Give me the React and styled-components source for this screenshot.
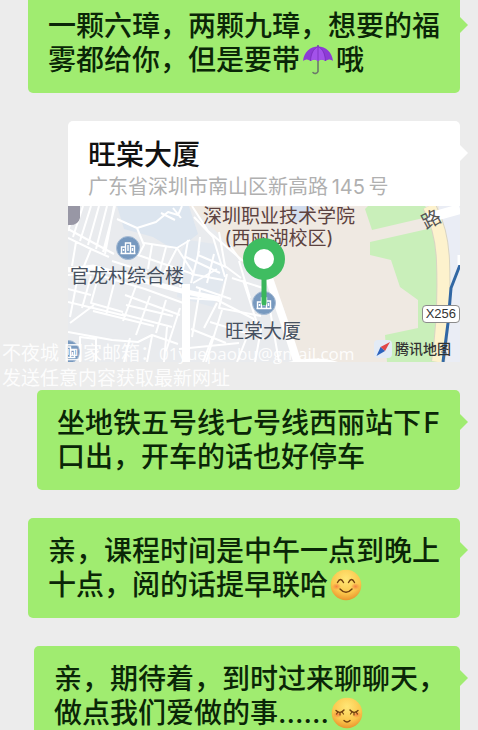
import React from "react";
import styled, { createGlobalStyle } from "styled-components";

const GlobalStyle = createGlobalStyle`
    * {
        box-sizing: border-box;
    }
    body {
        margin: 0;
        background: #ececec;
        font-family: Inter, "Noto Sans CJK SC", sans-serif;
    }
`

const Page = styled.main`
    position: relative;
    height: 100vh;
    overflow: hidden;
`

const Chat = styled.div`
    display: flex;
    flex-direction: column;
    align-items: flex-end;
    gap: 28px;
    margin-top: -7px;
    padding: 0 18px;
`

const Message = styled.div`
    position: relative;
    max-width: 100%;
    border-radius: 5px;
    background: ${(props) => props.$color};
    &::after {
        content: "";
        position: absolute;
        top: 24px;
        right: -8px;
        border-style: solid;
        border-width: 8px 0 8px 8px;
        border-color: transparent transparent transparent ${(props) => props.$color};
    }
`

const Text = styled.p`
    margin: 0;
    padding: 16px ${(props) => (props.$endsInComma ? 14 : 20)}px 16px 20px;
    color: #0a2607;
    font-size: 28px;
    font-weight: 500;
    line-height: 34px;
    white-space: nowrap;
`

const Emoji = styled.svg`
    width: 32px;
    height: 32px;
    margin: 0 2px;
    vertical-align: -6px;
`

const Place = styled(Message)`
    width: 100%;
    max-width: 392px;
`

const PlaceHead = styled.header`
    height: 85px;
    padding: 17px 20px 0;
    h2 {
        margin: 0;
        color: #111;
        font-size: 28px;
        font-weight: 500;
        line-height: 34px;
    }
    p {
        margin: 3px 0 0;
        color: #b0b0b0;
        font-size: 20px;
        line-height: 24px;
        white-space: nowrap;
    }
`

const MapBox = styled.div`
    position: relative;
    height: 156px;
    overflow: hidden;
`

const MapArt = styled.svg`
    display: block;
    width: 392px;
    height: 156px;
`

const Label = styled.span`
    position: absolute;
    left: ${(props) => props.$x}px;
    top: ${(props) => props.$y}px;
    color: ${(props) => props.$color || "#475160"};
    font-size: 19px;
    line-height: 22px;
    text-align: center;
    white-space: nowrap;
    transform: rotate(${(props) => props.$turn || 0}deg);
`

const RoadSign = styled.span`
    position: absolute;
    right: 0;
    top: 99px;
    padding: 0 3px;
    border: 1px solid #8b8b8b;
    border-radius: 4px;
    background: #fff;
    color: #333;
    font-family: "Liberation Sans", sans-serif;
    font-size: 13px;
    line-height: 16px;
`

const Credit = styled.div`
    position: absolute;
    right: 9px;
    bottom: 3px;
    display: flex;
    align-items: center;
    gap: 3px;
    color: #333;
    font-size: 14px;
    font-weight: 500;
    line-height: 20px;
`

const Watermark = styled.div`
    position: absolute;
    top: 341px;
    left: 2px;
    color: rgba(255, 255, 255, 0.9);
    font-family: "Open Sans", "Noto Sans CJK SC", sans-serif;
    font-size: 19px;
    line-height: 25px;
    white-space: nowrap;
    pointer-events: none;
`

const Mail = styled.span`
    font-size: 17px;
`

const Umbrella = () => (
    <Emoji viewBox="0 0 32 32" aria-label="umbrella">
        <path d="M16 13v14.500a3 3 0 0 1-5 1" fill="none" stroke="#6c7a6a" strokeWidth="1.6" strokeLinecap="round" />
        <path d="M16 1v3" stroke="#6d3aa0" strokeWidth="1.4" />
        <path d="M1 17C2 8 8 2.500 16 2.500S30 8 31 17c-3-2-5-2-7.500 0-2.500-2-5-2-7.500 0-2.500-2-5-2-7.500 0C6 15 4 15 1 17Z" fill="#8d3bd6" />
        <path d="M8.500 17C9 9 12 4 16 2.500 20 4 23 9 23.500 17c-2.500-2-5-2-7.500 0-2.500-2-5-2-7.500 0Z" fill="#a352ea" />
        <path d="M16 3v13.500M16 2.500C11 5 9 10 8.500 17M16 2.500C21 5 23 10 23.500 17" fill="none" stroke="#7429b5" strokeWidth=".7" />
    </Emoji>
)

const Face = ({ id, children, label }) => (
    <Emoji viewBox="0 0 32 32" aria-label={label}>
        <defs>
            <radialGradient id={id} cx="50%" cy="30%" r="72%">
                <stop offset="0" stopColor="#ffe777" />
                <stop offset=".65" stopColor="#fbc74c" />
                <stop offset="1" stopColor="#e8902b" />
            </radialGradient>
            <radialGradient id={id + "-blush"}>
                <stop offset="0" stopColor="#f3733d" stopOpacity=".8" />
                <stop offset="1" stopColor="#f3733d" stopOpacity="0" />
            </radialGradient>
        </defs>
        <circle cx="16" cy="16" r="15.300" fill={`url(#${id})`} />
        <ellipse cx="6.500" cy="17.500" rx="4.500" ry="3.500" fill={`url(#${id}-blush)`} />
        <ellipse cx="25.500" cy="17.500" rx="4.500" ry="3.500" fill={`url(#${id}-blush)`} />
        <g fill="none" stroke="#71400f" strokeWidth="1.400" strokeLinecap="round">
            {children}
        </g>
    </Emoji>
)

const Smile = () => (
    <Face id="smile" label="smile">
        <path d="M7.500 13.500q3-6 6 0M18.500 13.500q3-6 6 0M10 20q6 6.500 12 0" />
    </Face>
)

const Shy = () => (
    <Face id="shy" label="shy smile">
        <path d="M5 13.500q4 4 8-.5M19 13q4 4.500 8 .5M13 23.500q3 3 6 0" />
        <path d="M5.500 17l1.500-2M9 18v-2.500M12.500 17l-1.500-2M19.500 17l1.500-2M23 18v-2.500M26.500 17l-1.500-2" strokeWidth="1.200" />
    </Face>
)

const Building = ({ x, y }) => (
    <g transform={`translate(${x} ${y})`}>
        <circle r="11.500" fill="#7799bf" stroke="#a9bdd5" />
        <path d="M-6.500 5v-6h4v6M-2.500 5v-10h5v10M2.500 5v-7h4v7M-7.500 5.500h15M0-3v6M4.500 0v3M-4.500 1v2" fill="none" stroke="#fff" strokeWidth="1.400" />
    </g>
)

const MapDrawing = () => (
    <MapArt viewBox="0 0 392 156" aria-hidden="true">
        <rect width="392" height="156" fill="#e9ebee" />
        <path d="M49 0h72l9 28-22 17-23-14-29-8Z" fill="#dce5ef" />
        <path d="M120 34l27 4 12 30-14 33-36-10 4-45Z" fill="#e2e8ef" />
        <path d="M121 0h271v156H230l-14-53-15-29-27-17-24-30Z" fill="#efe9e2" />
        <path d="M222 0h21l-4 14-13 2Z" fill="#d2ddee" />

        {/* streets of the old town */}
        <g fill="none" stroke="#fff" strokeWidth="2" strokeLinejoin="round">
            <path d="M8 0L0 25M15 0L5 31M23 0L12 35M31 0L20 39M39 0L28 43M47 0L35 46M0 23l46 25M46 0l-9 48" />
            <path d="M49 13l20 9 19-6 12-10 10 3 4-9M69 22l7 17-6 11M93 7l14 7M105 2l8 10M76 37l33 5 13-8" />
            <path d="M0 32l23 11-9 22-14-3M8 36L4 60M23 43l18 8M44 55l35 11M70 49l55 19M109 42l-14 27" />
            <path d="M84 39l-4 24M98 41l-7 27M109 42l17 26M120 34l-8 47M132 31l-2 18 28 12M118 51l34 16" />
            <path d="M131 45l-8 32M146 48l-7 29M125 77l24-14M123 68l32 6M151 26l6 34 16 12M126 11l19 20 12 40" />
            <path d="M160 37l13 18M171 55l11 37M159 68l-8 34 42 8M128 81l35 12M164 72l31 10" />
            <path d="M0 69l24-2 53 16 41 15M31 68l-8 29 32 9M47 74l-9 35M68 80l-13 35M0 83l23 6M0 96l58 14M25 105l61 15" />
            <path d="M10 70L2 111M23 70l-9 32M2 117l24-18M57 89l55 20M82 90l-14 39M98 94l-10 33M54 108l50 13M58 99l47 11M112 102l-14 43" />
            <path d="M0 126l44 8 26 2 14-7 26 9M62 132l-6 24M84 130l-5 26M99 121l-3 35M12 156v-25l16 2v23" />
            <path d="M120 92l29 2 37 19M132 83l-8 48M154 104l-16 52M123 123l35 14M149 97l-13 25M186 113l-17 43M142 116l56 17" />
            <path d="M111 143l60-6M145 130l-10 26M194 118l-7 38M175 74l14 43M202 104l9 52" />
        </g>
        <path d="M0 64L25 61l89 24 38 8" fill="none" stroke="#fff" strokeWidth="5" />
        <path d="M118 78v78" stroke="#fff" strokeWidth="8" />
        <path d="M201 72l19 55 10 31" fill="none" stroke="#fff" strokeWidth="8" />
        <path d="M220 156q30-7 50 0Z" fill="#fff" />
        <path d="M124 0l16 25 34 29 25 15" fill="none" stroke="#fff" strokeWidth="2" />

        {/* parks */}
        <g fill="#c9efba">
            <path d="M297 3l3-3h57l7 10-60 14Z" />
            <path d="M302 36l62-14 8 27v107h-53l-2-27 33-7V94l-18-13-9-27-21-5Z" />
        </g>

        {/* ring road and county road */}
        <path d="M371 0h21v156h-22Z" fill="#eaedf5" />
        <path d="M361 0q13 24 14 55 2 55-5 101" fill="none" stroke="#d9d5c4" strokeWidth="14" />
        <path d="M361 0q13 24 14 55 2 55-5 101" fill="none" stroke="#fdf2cd" strokeWidth="12" />
        <path d="M360 12l32-9" stroke="#fff" strokeWidth="10" />
        <path d="M392 50v9l-9 23-3 35-5 39" fill="none" stroke="#3167a5" strokeWidth="3" />
        <path d="M392 49v10" stroke="#fff" strokeWidth="5" />

        <path d="M0 0h12v12q-2 8-12 7Z" fill="#9897a5" />
        <Building x={60} y={42} />
        <Building x={0} y={146} />
        <Building x={196} y={97} />
    </MapArt>
)

const PinDrawing = styled.svg`
    position: absolute;
    left: 174px;
    top: 31px;
    width: 44px;
    height: 70px;
`

const Pin = () => (
    <PinDrawing viewBox="0 0 44 70" aria-hidden="true">
        <path d="M22 36v30" stroke="#3ab65b" strokeWidth="5" strokeLinecap="round" />
        <circle cx="22" cy="22" r="15.500" fill="#fff" stroke="#3fbd61" strokeWidth="11" />
    </PinDrawing>
)

const Compass = () => (
    <svg width="18" height="18" viewBox="0 0 18 18" aria-hidden="true">
        <rect width="18" height="18" rx="4" fill="#e3ebf6" />
        <path d="M16 2L6.500 7l4.500 4Z" fill="#e14848" />
        <path d="M2.500 16l4-9 4.500 4Z" fill="#2d63bd" />
    </svg>
)

const Bubble = ({ children, endsInComma }) => (
    <Message $color="#a0ec70">
        <Text $endsInComma={endsInComma}>{children}</Text>
    </Message>
)

const App = () => {
    return (
    <Page>
        <GlobalStyle />
        <Chat>
            <Bubble>
                一颗六璋，两颗九璋，想要的福<br />
                雾都给你，但是要带<Umbrella />哦
            </Bubble>
            <Place as="article" $color="#fff">
                <PlaceHead>
                    <h2>旺棠大厦</h2>
                    <p>广东省深圳市南山区新高路&thinsp;145&thinsp;号</p>
                </PlaceHead>
                <MapBox>
                    <MapDrawing />
                    <Label $x={135} $y={0} $color="#5c4240">
                        深圳职业技术学院<br />(西丽湖校区)
                    </Label>
                    <Label $x={2} $y={60}>官龙村综合楼</Label>
                    <Label $x={157} $y={115}>旺棠大厦</Label>
                    <Label $x={354} $y={3} $turn={-28} $color="#555">路</Label>
                    <Pin />
                    <RoadSign>X256</RoadSign>
                    <Credit><Compass />腾讯地图</Credit>
                </MapBox>
            </Place>
            <Bubble>
                坐地铁五号线七号线西丽站下&#8202;F<br />
                口出，开车的话也好停车
            </Bubble>
            <Bubble>
                亲，课程时间是中午一点到晚上<br />
                十点，阅的话提早联哈<Smile />
            </Bubble>
            <Bubble endsInComma>
                亲，期待着，到时过来聊聊天，<br />
                做点我们爱做的事......<Shy />
            </Bubble>
        </Chat>
        <Watermark>
            不夜城 回家邮箱：<Mail>01yuepaobu@gmail.com</Mail><br />
            发送任意内容获取最新网址
        </Watermark>
    </Page>
)
}

export default App;
